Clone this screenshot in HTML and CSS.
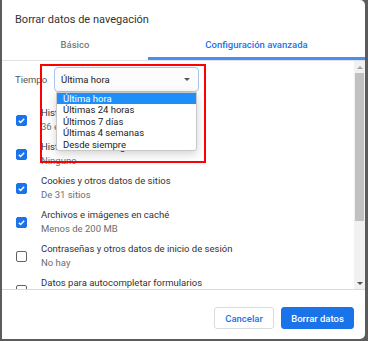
FILE: index.html
```html
<!DOCTYPE html>
<html lang="es">

<head>
    <meta charset="UTF-8">
    <meta name="viewport" content="width=device-width, initial-scale=1.0">
    <title>Borrar datos de navegación</title>
    <link rel="stylesheet" href="styles.css">
</head>

<body>
    <div class="dialog">
        <h1 class="dialog-title">Borrar datos de navegación</h1>

        <div class="tabs">
            <div class="tab">Básico</div>
            <div class="tab active">Configuración avanzada</div>
        </div>

        <div class="dialog-body">
            <div class="scroll-content">
                <div class="time-row">
                    <span class="time-label">Tiempo</span>
                    <div class="select">
                        <span>Última hora</span>
                        <span class="select-arrow"></span>
                        <ul class="dropdown">
                            <li class="selected">Última hora</li>
                            <li>Últimas 24 horas</li>
                            <li>Últimos 7 días</li>
                            <li>Últimas 4 semanas</li>
                            <li>Desde siempre</li>
                        </ul>
                    </div>
                </div>

                <div class="option">
                    <span class="checkbox checked"></span>
                    <div class="option-text">
                        <div class="option-title">Historial de navegación</div>
                        <div class="option-sub">36 elementos</div>
                    </div>
                </div>
                <div class="option">
                    <span class="checkbox checked"></span>
                    <div class="option-text">
                        <div class="option-title">Historial de descargas</div>
                        <div class="option-sub">Ninguno</div>
                    </div>
                </div>
                <div class="option">
                    <span class="checkbox checked"></span>
                    <div class="option-text">
                        <div class="option-title">Cookies y otros datos de sitios</div>
                        <div class="option-sub">De 31 sitios</div>
                    </div>
                </div>
                <div class="option">
                    <span class="checkbox checked"></span>
                    <div class="option-text">
                        <div class="option-title">Archivos e imágenes en caché</div>
                        <div class="option-sub">Menos de 200 MB</div>
                    </div>
                </div>
                <div class="option">
                    <span class="checkbox"></span>
                    <div class="option-text">
                        <div class="option-title">Contraseñas y otros datos de inicio de sesión</div>
                        <div class="option-sub">No hay</div>
                    </div>
                </div>
                <div class="option">
                    <span class="checkbox"></span>
                    <div class="option-text">
                        <div class="option-title">Datos para autocompletar formularios</div>
                        <div class="option-sub">Ninguno</div>
                    </div>
                </div>
            </div>

            <div class="scrollbar">
                <span class="scroll-btn up"></span>
                <span class="scroll-thumb"></span>
                <span class="scroll-track"></span>
                <span class="scroll-btn down"></span>
            </div>

            <div class="highlight-box"></div>
        </div>

        <div class="dialog-footer">
            <button class="btn btn-cancel">Cancelar</button>
            <button class="btn btn-primary">Borrar datos</button>
        </div>
    </div>
</body>

</html>
```
FILE: styles.css
```css
* {
    margin: 0;
    padding: 0;
    box-sizing: border-box;
}

body {
    font-family: Roboto, 'Liberation Sans', sans-serif;
    background-color: #5c5c5c;
    overflow: hidden;
}

.dialog {
    width: 363px;
    height: 339px;
    margin-left: 2px;
    background: #fff;
    border-radius: 0 5px 5px 0;
    display: flex;
    flex-direction: column;
    overflow: hidden;
}

.dialog-title {
    font-size: 11px;
    font-weight: 400;
    line-height: 14px;
    color: #333;
    padding: 13px 13px 0;
}

.tabs {
    display: grid;
    grid-template-columns: 146px 1fr;
    border-bottom: 1px solid #e2e2e2;
}

.tab {
    font-size: 9.5px;
    font-weight: 500;
    line-height: 12px;
    text-align: center;
    color: #7a7a7a;
    padding: 12px 0 6px;
    border-bottom: 3px solid transparent;
}

.tab.active {
    color: #1a73e8;
    border-bottom-color: #4a8ef0;
}

/* contenido con barra de desplazamiento */
.dialog-body {
    position: relative;
    display: flex;
    height: 229px;
    border-bottom: 1px solid #dadada;
}

.scroll-content {
    flex: 1;
    overflow: hidden;
    padding: 6px 0 0 13px;
}

.time-row {
    display: flex;
    align-items: center;
    height: 25px;
}

.time-label {
    width: 39px;
    font-size: 9.5px;
    color: #555;
}

.select {
    position: relative;
    width: 145px;
    height: 25px;
    border: 1px solid #a9c4ee;
    border-radius: 4px;
    background: #fcfcfc;
    display: flex;
    align-items: center;
    justify-content: space-between;
    padding: 0 8px 0 6px;
    font-size: 9.5px;
    color: #222;
}

.select-arrow {
    width: 0;
    height: 0;
    border-left: 3px solid transparent;
    border-right: 3px solid transparent;
    border-top: 3px solid #555;
}

.dropdown {
    position: absolute;
    top: 24px;
    left: 1px;
    width: 141px;
    list-style: none;
    background: #fff;
    border: 1px solid #c8c8c8;
    border-radius: 0 0 3px 3px;
    box-shadow: 0 3px 10px rgba(0, 0, 0, 0.18);
    z-index: 2;
}

.dropdown li {
    font-size: 9.5px;
    line-height: 11.4px;
    padding: 0 6px;
    color: #222;
}

.dropdown li.selected {
    background: #1e8ff8;
    color: #fff;
}

.option {
    display: flex;
    align-items: center;
    gap: 14px;
    height: 28px;
    margin-top: 6px;
    padding-left: 1px;
}

.time-row + .option {
    margin-top: 14px;
}

.checkbox {
    flex-shrink: 0;
    width: 11px;
    height: 11px;
    margin-top: 1px;
    border: 1.5px solid #5f6368;
    border-radius: 2px;
}

.checkbox.checked {
    border-color: #1a73e8;
    background: #1a73e8 url("data:image/svg+xml,%3Csvg xmlns='http://www.w3.org/2000/svg' viewBox='0 0 10 10'%3E%3Cpath d='M2 5.2l2 2 4-4.2' fill='none' stroke='white' stroke-width='1.6'/%3E%3C/svg%3E") center / 9px 9px no-repeat;
}

.option-text {
    font-size: 9.5px;
    line-height: 14px;
}

.option-title {
    color: #333;
}

.option-sub {
    color: #6e6e6e;
}

.scrollbar {
    width: 11px;
    display: flex;
    flex-direction: column;
    background: #f1f1f1;
}

.scroll-btn {
    height: 12px;
    display: flex;
    align-items: center;
    justify-content: center;
}

.scroll-btn::after {
    content: '';
    border-left: 3px solid transparent;
    border-right: 3px solid transparent;
}

.scroll-btn.up::after {
    border-bottom: 3px solid #a3a3a3;
}

.scroll-btn.down::after {
    border-top: 3px solid #505050;
}

.scroll-thumb {
    height: 148px;
    margin: 0 1px;
    background: #c1c1c1;
}

.scroll-track {
    flex: 1;
}

/* recuadro rojo de la captura */
.highlight-box {
    position: absolute;
    top: 3px;
    left: 38px;
    width: 166px;
    height: 99px;
    border: 2px solid #f00;
    z-index: 3;
}

.dialog-footer {
    flex: 1;
    display: flex;
    justify-content: flex-end;
    align-items: flex-start;
    gap: 7px;
    padding: 17px 11px 0 0;
}

.btn {
    height: 22px;
    font-family: Roboto, 'Liberation Sans', sans-serif;
    font-size: 9.5px;
    font-weight: 500;
    border-radius: 3px;
    cursor: pointer;
}

.btn-cancel {
    width: 60px;
    background: #fff;
    color: #1a73e8;
    border: 1px solid #dadce0;
}

.btn-primary {
    width: 73px;
    background: #1a73e8;
    color: #fff;
    border: 1px solid #1a73e8;
}
```
